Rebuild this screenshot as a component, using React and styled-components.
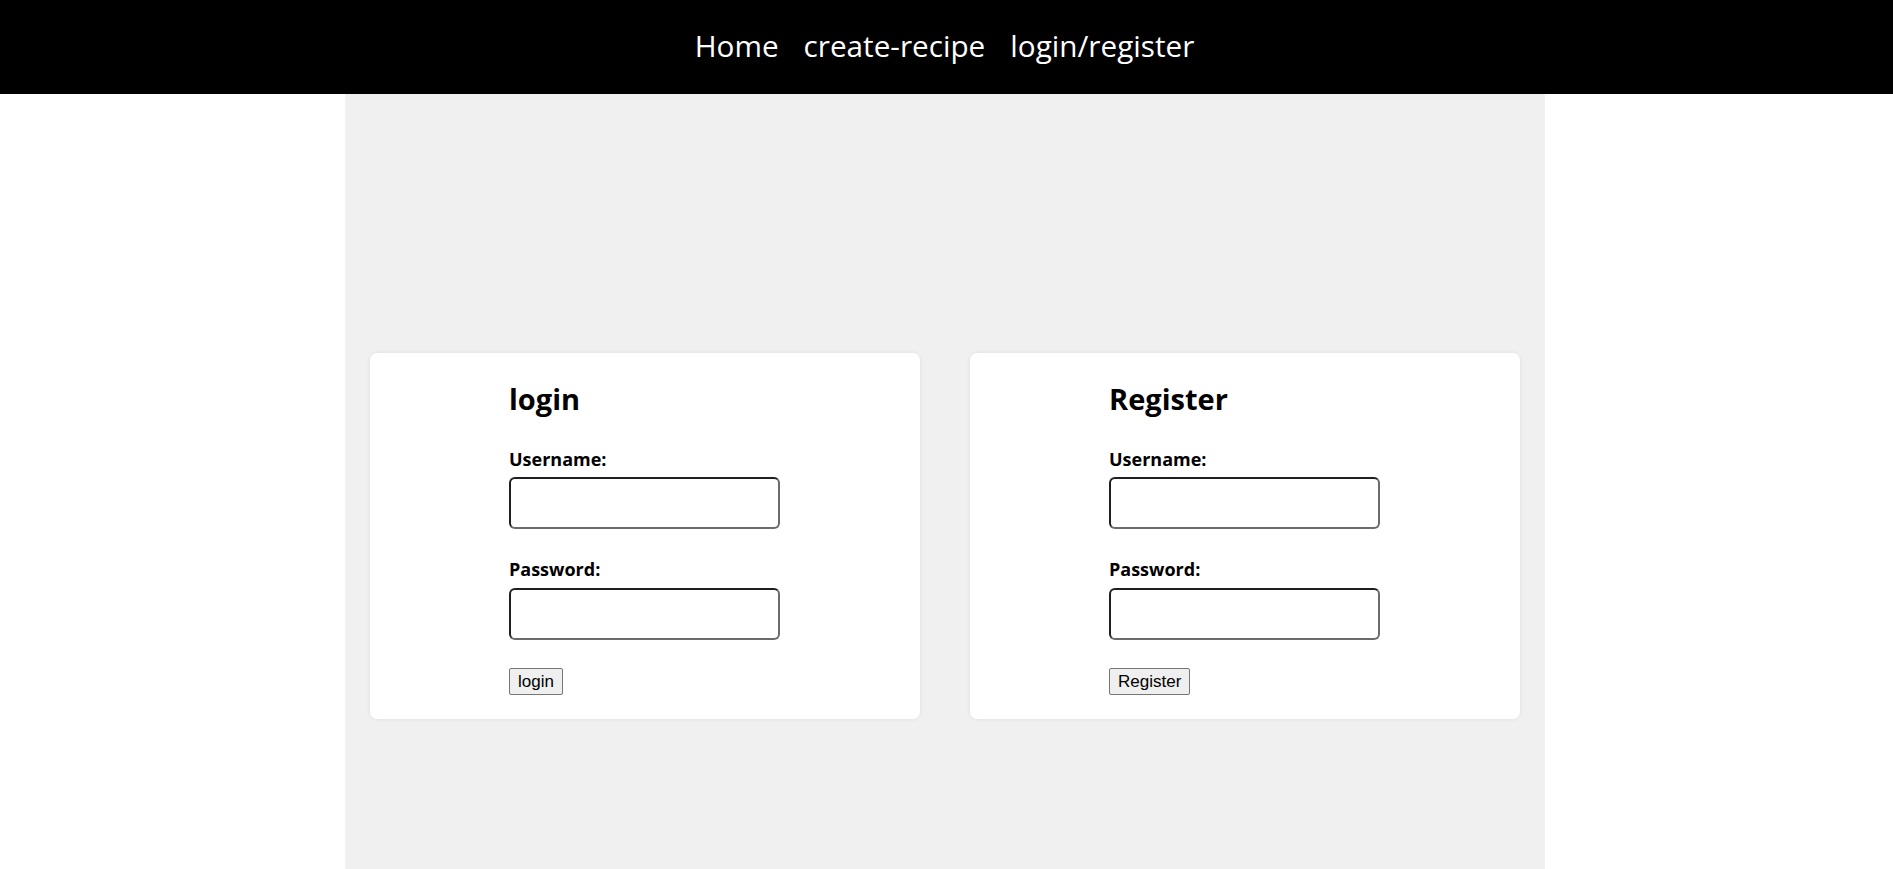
import styled, { createGlobalStyle } from "styled-components";

const GlobalStyle = createGlobalStyle`
  body {
    margin: 0;
    background: #fff;
    font-family: "Open Sans", "Noto Sans", sans-serif;
    color: #000;
  }
`;

// the original layout is offset ~3px left of true centre
const NavBar = styled.nav`
  height: 94px;
  background-color: #000;
  display: flex;
  align-items: center;
  justify-content: center;
  gap: 25px;
  padding-right: 4px;
`;

const NavLink = styled.a`
  color: #fff;
  font-size: 29.7px;
  text-decoration: none;
  line-height: 40px;
  padding-bottom: 2px;
`;

const Panel = styled.main`
  width: 1200px;
  margin-left: calc(50% - 602px);
  min-height: calc(100vh - 94px);
  box-sizing: border-box;
  background-color: #f0f0f0;
  padding: 259px 25px 0;
  display: flex;
  align-items: flex-start;
  gap: 50px;
`;

const Card = styled.section`
  flex: 1;
  background-color: #fff;
  border-radius: 7px;
  box-shadow: 0 0 4px rgba(0, 0, 0, 0.08);
  padding: 26px 0 24px;
`;

const Form = styled.form`
  width: 271px;
  margin: 0 auto;
  display: flex;
  flex-direction: column;
`;

const Title = styled.h2`
  margin: 0 0 27px;
  font-size: 29px;
  line-height: 40px;
  font-weight: 700;
`;

const Label = styled.label`
  display: block;
  font-size: 18px;
  line-height: 27px;
  font-weight: 700;
  margin-bottom: ${(p) => p.$gap}px;
`;

const Input = styled.input`
  box-sizing: border-box;
  width: 271px;
  height: 52px;
  border: 2px solid;
  border-color: #1f1f1f #6b6b6b #6b6b6b #1f1f1f;
  border-radius: 6px;
  background: #fff;
  margin-bottom: ${(p) => p.$after}px;
  outline: none;
`;

const Button = styled.button`
  align-self: flex-start;
  height: 27px;
  padding: 0 8px;
  font-family: "Liberation Sans", Arial, sans-serif;
  font-size: 17px;
  background-color: #efefef;
  color: #000;
  border: 1px solid #767676;
  border-radius: 2px;
`;

function AuthCard({ title, action }) {
  return (
    <Card>
      <Form onSubmit={(e) => e.preventDefault()}>
        <Title>{title}</Title>
        <Label $gap={4}>Username:</Label>
        <Input type="text" $after={27} />
        <Label $gap={5}>Password:</Label>
        <Input type="password" $after={28} />
        <Button type="submit">{action}</Button>
      </Form>
    </Card>
  );
}

export default function App() {
  return (
    <>
      <GlobalStyle />
      <NavBar>
        <NavLink href="#">Home</NavLink>
        <NavLink href="#">create-recipe</NavLink>
        <NavLink href="#">login/register</NavLink>
      </NavBar>
      <Panel>
        <AuthCard title="login" action="login" />
        <AuthCard title="Register" action="Register" />
      </Panel>
    </>
  );
}
